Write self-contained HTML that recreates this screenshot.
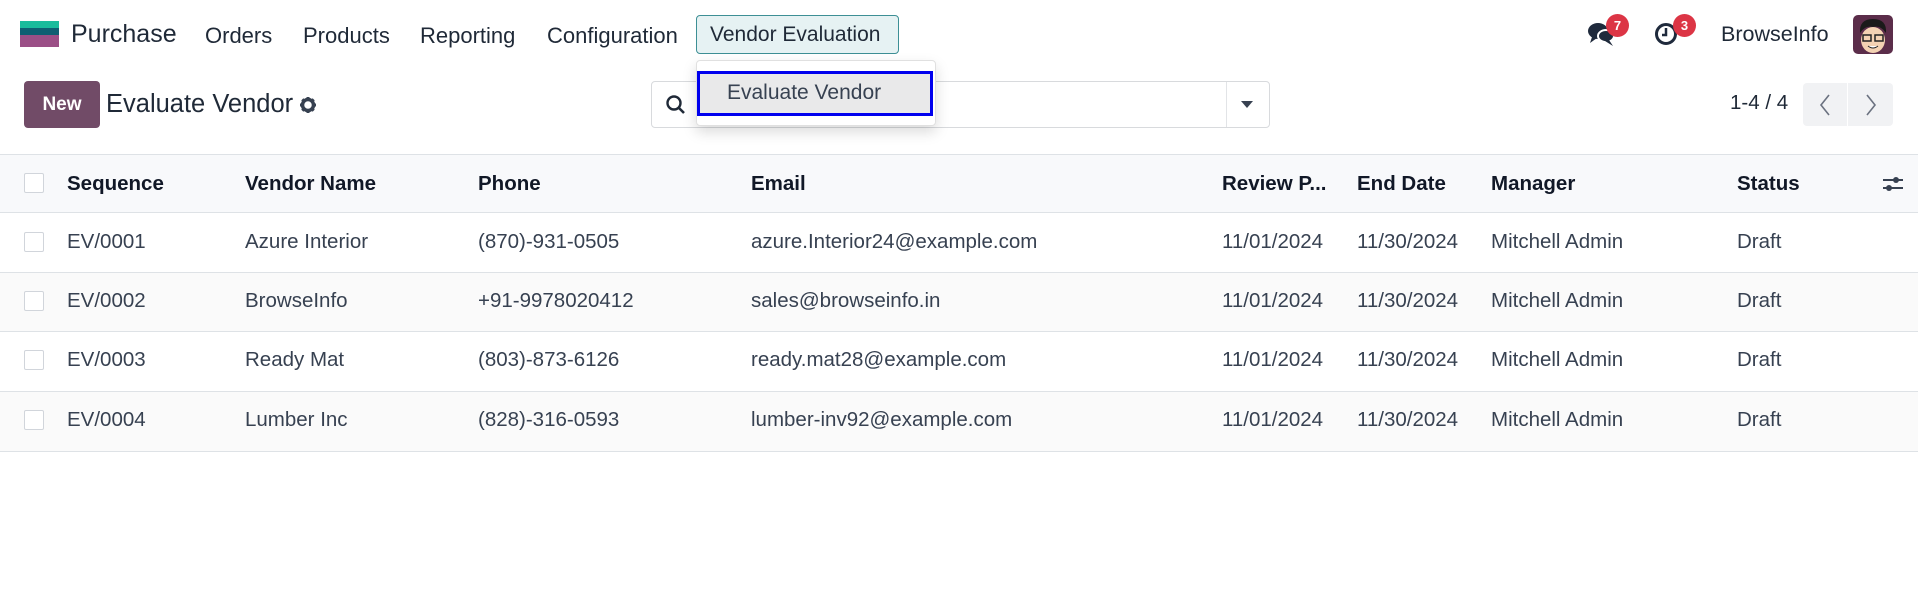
<!DOCTYPE html>
<html><head><meta charset="utf-8"><style>
*{box-sizing:border-box;margin:0;padding:0}
body{width:1918px;height:598px;background:#fff;font-family:"Liberation Sans",sans-serif;color:#374151;position:relative;overflow:hidden}
.a{position:absolute;white-space:nowrap}
.nav{font-size:22px;color:#1f2937;top:23px}
.th{font-size:20.5px;font-weight:bold;color:#111827}
.td{font-size:20.5px;color:#374151}
.cb{position:absolute;left:24px;width:20px;height:20px;border:1px solid #d1d5db;background:#fff;border-radius:2px}
.badge{position:absolute;width:23px;height:23px;border-radius:50%;background:#dc3545;color:#fff;font-size:13px;font-weight:bold;text-align:center;line-height:23px}
</style></head><body>
<div class="a" style="left:20px;top:21px;width:39px;height:7px;background:#1abc9c"></div>
<div class="a" style="left:20px;top:28px;width:39px;height:7px;background:#0f5f72"></div>
<div class="a" style="left:20px;top:35px;width:39px;height:12px;background:#9b4f86"></div>
<div class="a" style="left:71px;top:20px;font-size:25px;color:#1f2937">Purchase</div>
<div class="a nav" style="left:205px">Orders</div>
<div class="a nav" style="left:303px">Products</div>
<div class="a nav" style="left:420px">Reporting</div>
<div class="a nav" style="left:547px">Configuration</div>
<div class="a" style="left:696px;top:15px;width:203px;height:39px;background:#e6f2f3;border:1px solid #3d8f95;border-radius:4px"></div>
<div class="a nav" style="left:710px;font-size:21px;top:23px">Vendor Evaluation</div>
<svg class="a" style="left:1587px;top:21px" width="30" height="26" viewBox="0 0 30 26"><ellipse cx="11" cy="10" rx="10" ry="8" fill="#1f2a3c"/><path d="M5 16 L3 22 L10 17Z" fill="#1f2a3c"/><ellipse cx="19" cy="15" rx="8" ry="6" fill="#1f2a3c" stroke="#fff" stroke-width="2"/><path d="M22 19 L26 25 L18 20Z" fill="#1f2a3c"/></svg>
<div class="badge" style="left:1606px;top:14px">7</div>
<svg class="a" style="left:1654px;top:21px" width="26" height="26" viewBox="0 0 26 26"><circle cx="12" cy="13" r="9.5" fill="none" stroke="#1f2a3c" stroke-width="3"/><path d="M12 7v7h-4" fill="none" stroke="#1f2a3c" stroke-width="2.5"/></svg>
<div class="badge" style="left:1673px;top:14px">3</div>
<div class="a" style="left:1721px;top:22px;font-size:21.5px;color:#1f2937">BrowseInfo</div>
<svg class="a" style="left:1853px;top:15px" width="40" height="39" viewBox="0 0 40 39"><rect width="40" height="39" rx="5" fill="#5b2d4a"/><ellipse cx="20" cy="25" rx="12" ry="13" fill="#f3d2b3"/><path d="M7 18 Q6 4 20 4 Q34 4 33 18 Q28 10 20 12 Q12 10 7 18Z" fill="#1a1a1a"/><rect x="10" y="20" width="8" height="6" fill="none" stroke="#222" stroke-width="1.5"/><rect x="22" y="20" width="8" height="6" fill="none" stroke="#222" stroke-width="1.5"/><path d="M15 31 Q20 35 25 31" fill="#fff" stroke="#222"/></svg>
<div class="a" style="left:24px;top:81px;width:76px;height:47px;background:#714b67;border-radius:4px;color:#fff;font-size:19px;font-weight:bold;text-align:center;line-height:47px">New</div>
<div class="a" style="left:106px;top:90px;font-size:25.5px;color:#1f2937">Evaluate Vendor</div>
<svg class="a" style="left:299px;top:96px" width="18" height="18" viewBox="0 0 18 18"><circle cx="9" cy="9" r="5.5" fill="none" stroke="#374151" stroke-width="3.5"/><g stroke="#374151" stroke-width="3"><path d="M9 1v3M9 14v3M1 9h3M14 9h3M3.3 3.3l2.1 2.1M12.6 12.6l2.1 2.1M3.3 14.7l2.1-2.1M12.6 5.4l2.1-2.1"/></g></svg>
<div class="a" style="left:651px;top:81px;width:619px;height:47px;border:1px solid #d8dadd;border-radius:4px"></div>
<div class="a" style="left:1226px;top:82px;width:1px;height:45px;background:#e2e4e7"></div>
<div class="a" style="left:1241px;top:101px;width:0;height:0;border-left:6px solid transparent;border-right:6px solid transparent;border-top:7px solid #374151"></div>
<svg class="a" style="left:665px;top:94px" width="22" height="22" viewBox="0 0 22 22"><circle cx="9" cy="9" r="6.5" fill="none" stroke="#1f2937" stroke-width="2.4"/><path d="M14 14l5 5" stroke="#1f2937" stroke-width="2.6"/></svg>
<div class="a" style="left:696px;top:60px;width:240px;height:66px;background:#fff;border:1px solid #e0e0e0;border-radius:4px;box-shadow:0 6px 14px rgba(0,0,0,0.15)"></div>
<div class="a" style="left:697px;top:71px;width:236px;height:45px;background:#e9e9ea;border:3px solid #0000ee"></div>
<div class="a" style="left:727px;top:81px;font-size:21px;color:#374151">Evaluate Vendor</div>
<div class="a" style="left:1730px;top:91px;font-size:20.5px;color:#1f2937">1-4 / 4</div>
<div class="a" style="left:1803px;top:83px;width:44px;height:43px;background:#f1f2f4;border-radius:4px 0 0 4px"></div>
<div class="a" style="left:1848px;top:83px;width:45px;height:43px;background:#f1f2f4;border-radius:0 4px 4px 0"></div>
<svg class="a" style="left:1818px;top:93px" width="14" height="24" viewBox="0 0 14 24"><path d="M11 2L3 12l8 10" fill="none" stroke="#6b7280" stroke-width="1.6"/></svg>
<svg class="a" style="left:1864px;top:93px" width="14" height="24" viewBox="0 0 14 24"><path d="M3 2l8 10-8 10" fill="none" stroke="#6b7280" stroke-width="1.6"/></svg>
<div class="a" style="left:0;top:154px;width:1918px;height:59px;background:#f8f9fb;border-top:1px solid #dee2e6;border-bottom:1px solid #dee2e6"></div>
<div class="a" style="left:0;top:272px;width:1918px;height:59px;background:#fafafa"></div>
<div class="a" style="left:0;top:391px;width:1918px;height:60px;background:#fafafa"></div>
<div class="a" style="left:0;top:272px;width:1918px;height:1px;background:#dee2e6"></div>
<div class="a" style="left:0;top:331px;width:1918px;height:1px;background:#dee2e6"></div>
<div class="a" style="left:0;top:391px;width:1918px;height:1px;background:#dee2e6"></div>
<div class="a" style="left:0;top:451px;width:1918px;height:1px;background:#dee2e6"></div>
<div class="cb" style="top:173px"></div><div class="cb" style="top:232px"></div><div class="cb" style="top:291px"></div><div class="cb" style="top:350px"></div><div class="cb" style="top:410px"></div>
<div class="a th" style="left:67px;top:172px">Sequence</div>
<div class="a th" style="left:245px;top:172px">Vendor Name</div>
<div class="a th" style="left:478px;top:172px">Phone</div>
<div class="a th" style="left:751px;top:172px">Email</div>
<div class="a th" style="left:1222px;top:172px">Review P...</div>
<div class="a th" style="left:1357px;top:172px">End Date</div>
<div class="a th" style="left:1491px;top:172px">Manager</div>
<div class="a th" style="left:1737px;top:172px">Status</div>
<svg class="a" style="left:1882px;top:173px" width="22" height="22" viewBox="0 0 22 22"><path d="M1 7h20M1 15h20" stroke="#374151" stroke-width="2"/><circle cx="14" cy="7" r="3" fill="#374151"/><circle cx="7" cy="15" r="3" fill="#374151"/></svg>
<div class="a td" style="left:67px;top:230px">EV/0001</div><div class="a td" style="left:245px;top:230px">Azure Interior</div><div class="a td" style="left:478px;top:230px">(870)-931-0505</div><div class="a td" style="left:751px;top:230px">azure.Interior24@example.com</div><div class="a td" style="left:1222px;top:230px">11/01/2024</div><div class="a td" style="left:1357px;top:230px">11/30/2024</div><div class="a td" style="left:1491px;top:230px">Mitchell Admin</div><div class="a td" style="left:1737px;top:230px">Draft</div>
<div class="a td" style="left:67px;top:289px">EV/0002</div><div class="a td" style="left:245px;top:289px">BrowseInfo</div><div class="a td" style="left:478px;top:289px">+91-9978020412</div><div class="a td" style="left:751px;top:289px">sales@browseinfo.in</div><div class="a td" style="left:1222px;top:289px">11/01/2024</div><div class="a td" style="left:1357px;top:289px">11/30/2024</div><div class="a td" style="left:1491px;top:289px">Mitchell Admin</div><div class="a td" style="left:1737px;top:289px">Draft</div>
<div class="a td" style="left:67px;top:348px">EV/0003</div><div class="a td" style="left:245px;top:348px">Ready Mat</div><div class="a td" style="left:478px;top:348px">(803)-873-6126</div><div class="a td" style="left:751px;top:348px">ready.mat28@example.com</div><div class="a td" style="left:1222px;top:348px">11/01/2024</div><div class="a td" style="left:1357px;top:348px">11/30/2024</div><div class="a td" style="left:1491px;top:348px">Mitchell Admin</div><div class="a td" style="left:1737px;top:348px">Draft</div>
<div class="a td" style="left:67px;top:408px">EV/0004</div><div class="a td" style="left:245px;top:408px">Lumber Inc</div><div class="a td" style="left:478px;top:408px">(828)-316-0593</div><div class="a td" style="left:751px;top:408px">lumber-inv92@example.com</div><div class="a td" style="left:1222px;top:408px">11/01/2024</div><div class="a td" style="left:1357px;top:408px">11/30/2024</div><div class="a td" style="left:1491px;top:408px">Mitchell Admin</div><div class="a td" style="left:1737px;top:408px">Draft</div>
</body></html>
